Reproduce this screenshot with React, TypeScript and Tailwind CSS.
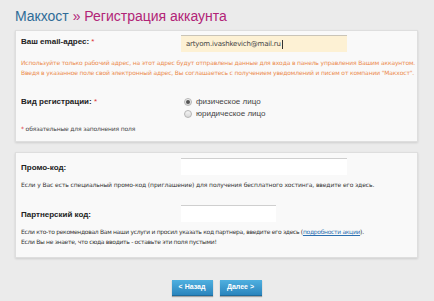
import React from 'react';

function Radio({ checked }: { checked?: boolean }) {
  return (
    <span className="w-[8px] h-[8px] rounded-full border border-[#b5b5b5] bg-gradient-to-b from-[#f4f4f4] to-[#d9d9d9] flex items-center justify-center shrink-0">
      {checked && <span className="w-[4px] h-[4px] rounded-full bg-[#555]" />}
    </span>
  );
}

export default function App() {
  return (
    <div className="w-[434px] h-[301px] bg-[#ebebeb] overflow-hidden font-['Liberation_Sans',Arial,sans-serif] pl-[15px] pt-[6px]">
      {/* Title */}
      <h1 className="h-[21px] text-[14px] leading-[21px]">
        <span className="text-[#2f6b98]">Макхост</span>
        <span className="text-[#b22477]"> » Регистрация аккаунта</span>
      </h1>

      {/* Panel 1 */}
      <div className="mt-[3px] w-[403px] h-[112px] bg-[#f9f9f9] border border-[#dedede] shadow-[0_1px_2px_rgba(0,0,0,0.12)] px-[5px] pt-[4px]">
        <div className="flex items-start">
          <div className="w-[160px] pt-[2px] text-[8px] font-bold text-[#222] leading-[10px]">
            Ваш email-адрес: <span className="text-[#d33] font-normal">*</span>
          </div>
          <div className="w-[166px] h-[17px] bg-[#fdf1d4] border-t border-[#c9c4b8] flex items-center pl-[5px] text-[7px] text-[#444] font-['DejaVu_Sans',sans-serif] tracking-[-0.2px]">
            artyom.ivashkevich@mail.ru<span className="w-px h-[9px] bg-[#333] ml-px" />
          </div>
        </div>
        <div className="mt-[6px] text-[6px] leading-[10px] text-[#ec8a4c] font-['DejaVu_Sans',sans-serif] tracking-[-0.15px] whitespace-nowrap">
          <p>Используйте только рабочий адрес, на этот адрес будут отправлены данные для входа в панель управления Вашим аккаунтом.</p>
          <p>Введя в указанное поле свой электронный адрес, Вы соглашаетесь с получением уведомлений и писем от компании "Макхост".</p>
        </div>

        <div className="mt-[18px] flex items-start">
          <div className="w-[160px] text-[8px] font-bold text-[#222] leading-[12px]">
            Вид регистрации: <span className="text-[#d33] font-normal">*</span>
          </div>
          <div className="flex flex-col text-[8px] leading-[12px] text-[#444] pl-[3px]">
            <label className="flex items-center gap-[4px]">
              <Radio checked />
              физическое лицо
            </label>
            <label className="flex items-center gap-[4px]">
              <Radio />
              юридическое лицо
            </label>
          </div>
        </div>
        <div className="mt-[4px] text-[6px] leading-[10px] text-[#444] font-['DejaVu_Sans',sans-serif] tracking-[-0.15px]">
          <span className="text-[#d33]">*</span> обязательные для заполнения поля
        </div>
      </div>

      {/* Panel 2 */}
      <div className="mt-[10px] w-[403px] h-[106px] bg-[#f9f9f9] border border-[#dedede] shadow-[0_1px_2px_rgba(0,0,0,0.12)] px-[5px] pt-[5px]">
        <div className="flex items-start">
          <div className="w-[160px] pt-[5px] text-[8px] font-bold text-[#222] leading-[10px]">Промо-код:</div>
          <div className="w-[166px] h-[17px] bg-white border-t border-[#cfcfcf]" />
        </div>
        <p className="mt-[5px] text-[6px] leading-[10px] text-[#333] font-['DejaVu_Sans',sans-serif] tracking-[-0.1px] whitespace-nowrap">
          Если у Вас есть специальный промо-код (приглашение) для получения бесплатного хостинга, введите его здесь.
        </p>

        <div className="mt-[15px] flex items-start">
          <div className="w-[160px] pt-[5px] text-[8px] font-bold text-[#222] leading-[10px]">Партнерский код:</div>
          <div className="w-[95px] h-[17px] bg-white border-t border-[#cfcfcf]" />
        </div>
        <div className="mt-[5px] text-[6px] leading-[10px] text-[#333] font-['DejaVu_Sans',sans-serif] tracking-[-0.3px] whitespace-nowrap">
          <p>
            Если кто-то рекомендовал Вам наши услуги и просил указать код партнера, введите его здесь (
            <a className="text-[#2a6fb0] underline">подробности акции</a>).
          </p>
          <p>Если Вы не знаете, что сюда вводить - оставьте эти поля пустыми!</p>
        </div>
      </div>

      {/* Buttons */}
      <div className="mt-[22px] w-[403px] flex justify-center gap-[7px]">
        <button className="w-[41px] h-[16px] bg-gradient-to-b from-[#4fb0e0] to-[#2a85bd] text-white text-[7px] font-bold shadow-[0_1px_1px_rgba(0,0,0,0.3)] border-b border-[#1f6c9c]">
          &lt; Назад
        </button>
        <button className="w-[42px] h-[16px] bg-gradient-to-b from-[#4fb0e0] to-[#2a85bd] text-white text-[7px] font-bold shadow-[0_1px_1px_rgba(0,0,0,0.3)] border-b border-[#1f6c9c]">
          Далее &gt;
        </button>
      </div>
    </div>
  );
}
